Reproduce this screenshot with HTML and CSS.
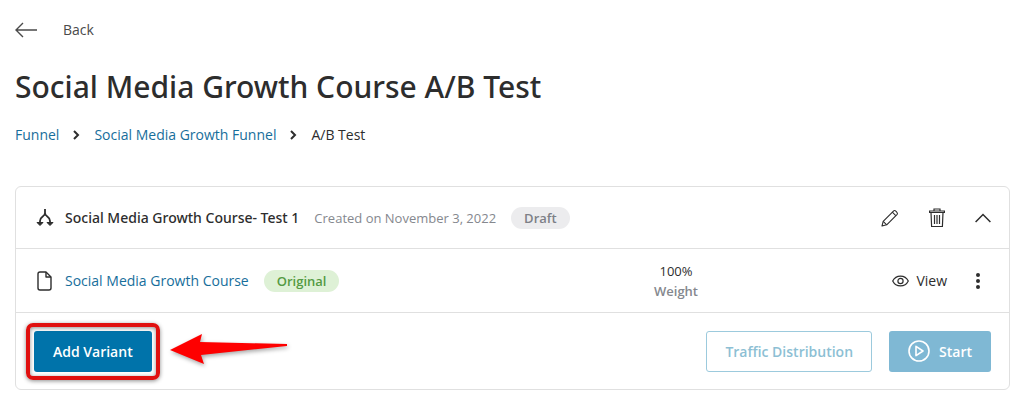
FILE: index.html
```html
<!DOCTYPE html>
<html lang="en">
<head>
  <meta charset="UTF-8">
  <meta name="viewport" content="width=device-width, initial-scale=1.0">
  <title>Social Media Growth Course A/B Test</title>
  <link rel="stylesheet" href="styles.css">
</head>
<body>
  <main class="page">
    <a href="#" class="back">
      <svg width="22" height="16" viewBox="0 0 22 16" fill="none" stroke="currentColor" stroke-width="1.4">
        <path d="M22 8H1M8 1L1 8l7 7"/>
      </svg>
      <span>Back</span>
    </a>

    <h1>Social Media Growth Course A/B Test</h1>

    <nav class="breadcrumb">
      <a href="#">Funnel</a>
      <svg width="7" height="10" viewBox="0 0 7 10" fill="none" stroke="currentColor" stroke-width="2">
        <path d="M1 1l4 4-4 4"/>
      </svg>
      <a href="#">Social Media Growth Funnel</a>
      <svg width="7" height="10" viewBox="0 0 7 10" fill="none" stroke="currentColor" stroke-width="2">
        <path d="M1 1l4 4-4 4"/>
      </svg>
      <span>A/B Test</span>
    </nav>

    <section class="card">
      <header class="card-header">
        <svg class="row-icon" width="18" height="20" viewBox="0 0 18 20" fill="none" stroke="currentColor" stroke-width="1.8">
          <path d="M9 1v5M9 5c0 4-5 3-5 8v3M9 5c0 4 5 3 5 8v3"/>
          <path d="M1 14.5h6L4 17.500zM11 14.500h6l-3 3z" fill="currentColor" stroke-width="1"/>
        </svg>
        <h2>Social Media Growth Course- Test 1</h2>
        <span class="created">Created on November 3, 2022</span>
        <span class="badge badge-draft">Draft</span>
        <div class="actions">
          <button type="button" class="icon-btn" aria-label="Edit">
            <svg width="18" height="18" viewBox="0 0 18 18" fill="none" stroke="currentColor" stroke-width="1.1" stroke-linejoin="round">
              <path d="M1 17l1.200-4.700L12.700 1.800c1.200-1.200 4.700 2.200 3.500 3.500L5.700 15.800z"/>
              <path d="M2.200 12.300l3.500 3.500M11.300 3.200l3.500 3.500"/>
            </svg>
          </button>
          <button type="button" class="icon-btn" aria-label="Delete">
            <svg width="16" height="20" viewBox="0 0 16 20" fill="none" stroke="currentColor" stroke-width="1.2">
              <path d="M.6 4.500V3h14.800v1.500zM5 3V1h6v2M2 4.500l.6 14h10.800l.6-14"/>
              <path d="M5.500 7v9M8 7v9M10.500 7v9"/>
            </svg>
          </button>
          <button type="button" class="icon-btn" aria-label="Collapse">
            <svg width="16" height="10" viewBox="0 0 16 10" fill="none" stroke="currentColor" stroke-width="1.5">
              <path d="M.6 9L8 1.500 15.400 9"/>
            </svg>
          </button>
        </div>
      </header>

      <div class="variant">
        <div class="variant-name">
          <svg class="row-icon" width="18" height="20" viewBox="0 0 18 20" fill="none" stroke="currentColor" stroke-width="1.4" stroke-linejoin="round">
            <path d="M10 1H4a2 2 0 0 0-2 2v14a2 2 0 0 0 2 2h9a2 2 0 0 0 2-2V6z"/>
            <path d="M10 1v5h5"/>
          </svg>
          <a href="#">Social Media Growth Course</a>
          <span class="badge badge-original">Original</span>
        </div>
        <div class="weight">
          <span>100%</span>
          <span class="weight-label">Weight</span>
        </div>
        <div class="variant-actions">
          <a href="#" class="view">
            <svg width="17" height="12" viewBox="0 0 17 12" fill="none" stroke="currentColor" stroke-width="1.2">
              <path d="M.7 6C4-.6 13-.6 16.300 6 13 12.600 4 12.600.7 6z"/>
              <circle cx="8.500" cy="6" r="2.600"/>
            </svg>
            View
          </a>
          <button type="button" class="icon-btn" aria-label="More">
            <svg width="4" height="16" viewBox="0 0 4 16" fill="currentColor">
              <circle cx="2" cy="2" r="2"/>
              <circle cx="2" cy="8" r="2"/>
              <circle cx="2" cy="14" r="2"/>
            </svg>
          </button>
        </div>
      </div>

      <footer class="card-footer">
        <div class="highlight">
          <button type="button" class="btn btn-primary">Add Variant</button>
          <svg class="arrow" width="118" height="30" viewBox="0 0 118 30">
            <path d="M0 16L32 0l-2 8 87 2v2L31 21l3 9z" fill="#fe0000"/>
          </svg>
        </div>
        <div class="footer-actions">
          <button type="button" class="btn btn-outline">Traffic Distribution</button>
          <button type="button" class="btn btn-start">
            <svg width="22" height="22" viewBox="0 0 22 22" fill="none" stroke="currentColor" stroke-width="1.600" stroke-linejoin="round">
              <circle cx="11" cy="11" r="10"/>
              <path d="M8 6.300v9.400l7-4.700z"/>
            </svg>
            Start
          </button>
        </div>
      </footer>
    </section>
  </main>
</body>
</html>
```
FILE: styles.css
```css
* {
  box-sizing: border-box;
}

body {
  margin: 0;
  background-color: #fff;
  color: #2d2d2d;
  font-family: "Segoe UI", "Open Sans", "Noto Sans", sans-serif;
  font-size: 14px;
  line-height: 20px;
}

a {
  color: #176e9b;
  text-decoration: none;
}

svg {
  display: block;
  flex-shrink: 0;
}

button {
  font-family: inherit;
  cursor: pointer;
}

.page {
  padding: 20px 14px 15px 15px;
}

.back {
  display: flex;
  align-items: center;
  gap: 26px;
  width: fit-content;
  color: #4a4a4a;
}

h1,
h2 {
  font-family: "Segoe UI", "Noto Sans", sans-serif;
  font-weight: 500;
}

h1 {
  margin: 27px 0 18px;
  font-size: 30px;
  line-height: 40px;
}

.breadcrumb {
  display: flex;
  align-items: center;
  gap: 14px;
}

.card {
  margin-top: 41px;
  border: 1px solid #e0e0e0;
  border-radius: 6px;
}

.card-header,
.variant,
.card-footer {
  display: flex;
  align-items: center;
  padding: 0 18px;
}

.card-header {
  height: 61px;
}

.row-icon {
  margin: 0 11px 0 2px;
}

h2 {
  margin: 0;
  font-size: 14px;
}

.created {
  margin-left: 15px;
  color: #85888e;
  font-size: 13px;
}

.badge {
  margin-left: 15px;
  padding: 1px 13px;
  border-radius: 11px;
  font-size: 13px;
  font-weight: 600;
}

.badge-draft {
  background-color: #ececee;
  color: #7d8087;
}

.badge-original {
  background-color: #def1d6;
  color: #549a43;
}

.actions {
  display: flex;
  align-items: center;
  gap: 30px;
  margin-left: auto;
}

.icon-btn {
  padding: 0;
  border: 0;
  background: none;
  color: #2d2d2d;
}

.variant {
  height: 64px;
  border-top: 1px solid #e0e0e0;
}

.variant-name,
.variant-actions {
  display: flex;
  flex: 1 1 0;
  align-items: center;
}

.variant-name {
  flex-grow: 2;
}

.variant-actions {
  justify-content: flex-end;
  gap: 29px;
  padding-right: 11px;
}

.weight {
  display: flex;
  flex-direction: column;
  margin-left: 56px;
  text-align: center;
  font-size: 13px;
}

.weight-label {
  color: #85888e;
  font-weight: 600;
}

.view {
  display: flex;
  align-items: center;
  gap: 7px;
  color: #2d2d2d;
}

.card-footer {
  justify-content: space-between;
  height: 77px;
  border-top: 1px solid #e0e0e0;
}

.btn {
  display: flex;
  align-items: center;
  height: 41px;
  padding: 0 18px;
  border: 1px solid transparent;
  border-radius: 3px;
  font-size: 14px;
  font-weight: 600;
}

.btn-primary {
  background-color: #0073aa;
  color: #fff;
}

.btn-outline {
  border-color: #9ccadd;
  background-color: #fff;
  color: #8dbfd4;
}

.btn-start {
  gap: 9px;
  background-color: #7fb8d4;
  color: #fff;
}

.footer-actions {
  display: flex;
  gap: 17px;
}

.highlight {
  position: relative;
}

/* red marker around the button */
.highlight::before {
  content: "";
  position: absolute;
  inset: -8px;
  border: 4px solid #e0100f;
  border-radius: 7px;
  box-shadow: 0 1px 4px rgba(0, 0, 0, 0.45), inset 0 1px 4px rgba(0, 0, 0, 0.45);
  pointer-events: none;
}

.arrow {
  position: absolute;
  left: calc(100% + 18px);
  top: 3px;
  filter: drop-shadow(1px 2px 2px rgba(0, 0, 0, 0.35));
}
```
